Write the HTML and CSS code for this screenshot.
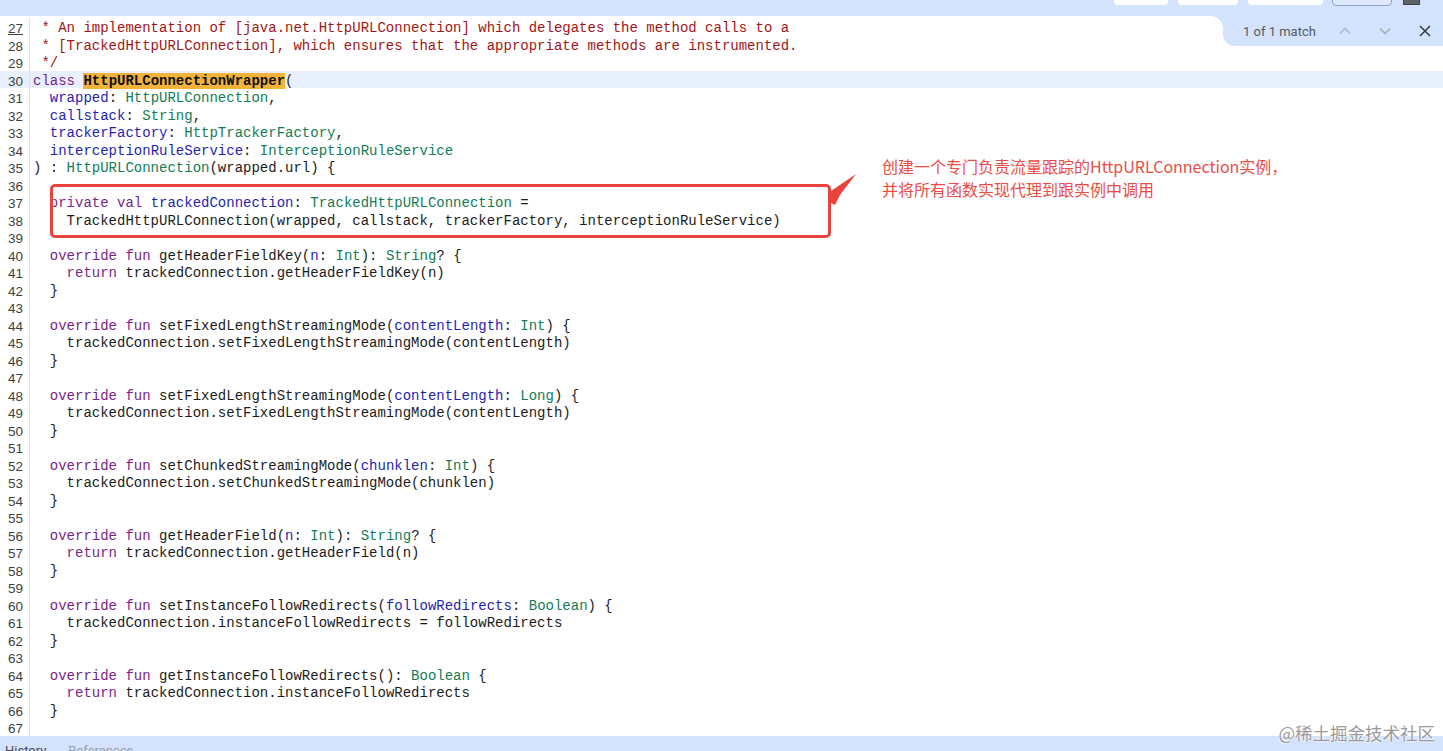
FILE: index.html
```html
<!DOCTYPE html>
<html lang="en">
<head>
    <meta charset="UTF-8">
    <title>HttpURLConnectionWrapper.kt</title>
    <link rel="stylesheet" href="styles.css">
</head>
<body>

    <div class="topbar">
        <div class="top-actions">
            <span class="top-btn w54"></span>
            <span class="top-btn w60"></span>
            <span class="top-btn w75"></span>
            <span class="top-btn outline w59"></span>
            <span class="top-icon"></span>
        </div>
    </div>

    <div class="editor">
        <div class="line"><span class="num under">27</span><span class="code c"> * An implementation of [java.net.HttpURLConnection] which delegates the method calls to a</span></div>
        <div class="line"><span class="num">28</span><span class="code c"> * [TrackedHttpURLConnection], which ensures that the appropriate methods are instrumented.</span></div>
        <div class="line"><span class="num">29</span><span class="code c"> */</span></div>
        <div class="line current"><span class="num">30</span><span class="code"><span class="k">class</span> <span class="match">HttpURLConnectionWrapper</span>(</span></div>
        <div class="line"><span class="num">31</span><span class="code">  <span class="d">wrapped</span>: <span class="t">HttpURLConnection</span>,</span></div>
        <div class="line"><span class="num">32</span><span class="code">  <span class="d">callstack</span>: <span class="t">String</span>,</span></div>
        <div class="line"><span class="num">33</span><span class="code">  <span class="d">trackerFactory</span>: <span class="t">HttpTrackerFactory</span>,</span></div>
        <div class="line"><span class="num">34</span><span class="code">  <span class="d">interceptionRuleService</span>: <span class="t">InterceptionRuleService</span></span></div>
        <div class="line"><span class="num">35</span><span class="code">) : <span class="t">HttpURLConnection</span>(wrapped.url) {</span></div>
        <div class="line"><span class="num">36</span><span class="code"></span></div>
        <div class="line"><span class="num">37</span><span class="code">  <span class="k">private val</span> <span class="d">trackedConnection</span>: <span class="t">TrackedHttpURLConnection</span> =</span></div>
        <div class="line"><span class="num">38</span><span class="code">    TrackedHttpURLConnection(wrapped, callstack, trackerFactory, interceptionRuleService)</span></div>
        <div class="line"><span class="num">39</span><span class="code"></span></div>
        <div class="line"><span class="num">40</span><span class="code">  <span class="k">override fun</span> getHeaderFieldKey(<span class="d">n</span>: <span class="t">Int</span>): <span class="t">String</span>? {</span></div>
        <div class="line"><span class="num">41</span><span class="code">    <span class="k">return</span> trackedConnection.getHeaderFieldKey(n)</span></div>
        <div class="line"><span class="num">42</span><span class="code">  }</span></div>
        <div class="line"><span class="num">43</span><span class="code"></span></div>
        <div class="line"><span class="num">44</span><span class="code">  <span class="k">override fun</span> setFixedLengthStreamingMode(<span class="d">contentLength</span>: <span class="t">Int</span>) {</span></div>
        <div class="line"><span class="num">45</span><span class="code">    trackedConnection.setFixedLengthStreamingMode(contentLength)</span></div>
        <div class="line"><span class="num">46</span><span class="code">  }</span></div>
        <div class="line"><span class="num">47</span><span class="code"></span></div>
        <div class="line"><span class="num">48</span><span class="code">  <span class="k">override fun</span> setFixedLengthStreamingMode(<span class="d">contentLength</span>: <span class="t">Long</span>) {</span></div>
        <div class="line"><span class="num">49</span><span class="code">    trackedConnection.setFixedLengthStreamingMode(contentLength)</span></div>
        <div class="line"><span class="num">50</span><span class="code">  }</span></div>
        <div class="line"><span class="num">51</span><span class="code"></span></div>
        <div class="line"><span class="num">52</span><span class="code">  <span class="k">override fun</span> setChunkedStreamingMode(<span class="d">chunklen</span>: <span class="t">Int</span>) {</span></div>
        <div class="line"><span class="num">53</span><span class="code">    trackedConnection.setChunkedStreamingMode(chunklen)</span></div>
        <div class="line"><span class="num">54</span><span class="code">  }</span></div>
        <div class="line"><span class="num">55</span><span class="code"></span></div>
        <div class="line"><span class="num">56</span><span class="code">  <span class="k">override fun</span> getHeaderField(<span class="d">n</span>: <span class="t">Int</span>): <span class="t">String</span>? {</span></div>
        <div class="line"><span class="num">57</span><span class="code">    <span class="k">return</span> trackedConnection.getHeaderField(n)</span></div>
        <div class="line"><span class="num">58</span><span class="code">  }</span></div>
        <div class="line"><span class="num">59</span><span class="code"></span></div>
        <div class="line"><span class="num">60</span><span class="code">  <span class="k">override fun</span> setInstanceFollowRedirects(<span class="d">followRedirects</span>: <span class="t">Boolean</span>) {</span></div>
        <div class="line"><span class="num">61</span><span class="code">    trackedConnection.instanceFollowRedirects = followRedirects</span></div>
        <div class="line"><span class="num">62</span><span class="code">  }</span></div>
        <div class="line"><span class="num">63</span><span class="code"></span></div>
        <div class="line"><span class="num">64</span><span class="code">  <span class="k">override fun</span> getInstanceFollowRedirects(): <span class="t">Boolean</span> {</span></div>
        <div class="line"><span class="num">65</span><span class="code">    <span class="k">return</span> trackedConnection.instanceFollowRedirects</span></div>
        <div class="line"><span class="num">66</span><span class="code">  }</span></div>
        <div class="line"><span class="num">67</span><span class="code"></span></div>

        <!-- annotation drawn over the code -->
        <div class="mark-box"></div>
        <svg class="mark-arrow" width="30" height="34" viewBox="0 0 30 34">
            <polygon points="1,18 26,1 10,22 5,32 1,30" fill="#e8433d"/>
        </svg>
        <div class="note">
            <p>创建一个专门负责流量跟踪的HttpURLConnection实例，</p>
            <p>并将所有函数实现代理到跟实例中调用</p>
        </div>

        <div class="findbar">
            <span class="find-count">1 of 1 match</span>
            <svg class="find-icon" width="16" height="16" viewBox="0 0 16 16">
                <path d="M3 10.5 L8 5.5 L13 10.5" fill="none" stroke="#b4b9c2" stroke-width="1.6"/>
            </svg>
            <svg class="find-icon" width="16" height="16" viewBox="0 0 16 16">
                <path d="M3 5.5 L8 10.5 L13 5.5" fill="none" stroke="#a9aeb6" stroke-width="1.6"/>
            </svg>
            <svg class="find-icon close" width="16" height="16" viewBox="0 0 16 16">
                <path d="M3 3 L13 13 M13 3 L3 13" fill="none" stroke="#3c4043" stroke-width="1.6"/>
            </svg>
        </div>
    </div>

    <div class="bottombar">
        <span class="tab">History</span>
        <span class="tab dim">References</span>
    </div>

    <div class="watermark">@稀土掘金技术社区</div>

</body>
</html>
```

FILE: styles.css
```css
body {
    margin: 0;
    background-color: white;
    overflow: hidden;
    height: 751px;
    position: relative;
    font-family: 'Liberation Sans', Arial, sans-serif;
}

.topbar {
    height: 16px;
    background-color: #d3e3fd;
    overflow: hidden;
}

.top-actions {
    display: flex;
    justify-content: flex-end;
    align-items: flex-start;
    gap: 10px;
    padding-right: 23px;
    margin-top: -12px;
}

.top-btn {
    height: 17px;
    background-color: white;
    border-radius: 4px;
}

.top-btn.outline {
    background-color: #dde8fb;
    border: 1px solid #8fa4c4;
    height: 16px;
    margin-left: -1px;
}

.w54 { width: 54px; }
.w60 { width: 60px; }
.w75 { width: 75px; }
.w59 { width: 58px; }

.top-icon {
    width: 15px;
    height: 15px;
    margin-left: 1px;
    background-color: #5f6368;
    border: 1px solid #3c4043;
}

.editor {
    position: relative;
    padding-top: 2px;
}

.line {
    display: flex;
    height: 17.5px;
    line-height: 17.5px;
}

.line.current {
    background-color: #e8f0fe;
}

.num {
    width: 23px;
    padding-right: 6px;
    padding-top: 2px;
    flex-shrink: 0;
    text-align: right;
    border-right: 1px solid #e2e2e2;
    font-family: 'Liberation Sans', Arial, sans-serif;
    font-size: 13.5px;
    color: #3f3f3f;
}

.num.under {
    text-decoration: underline;
}

.code {
    padding-left: 3px;
    padding-top: 2px;
    white-space: pre;
    font-family: 'Liberation Mono', 'Courier New', monospace;
    font-size: 14px;
    color: #1c1c1c;
}

.c { color: #a31515; }
.k { color: #7a1f8c; }
.d { color: #1f1fb4; }
.t { color: #117d58; }

.match {
    background-color: #f2b33a;
    font-weight: bold;
    color: #111;
}

.mark-box {
    position: absolute;
    left: 50px;
    top: 168px;
    width: 781px;
    height: 54px;
    box-sizing: border-box;
    border: 3px solid #e8433d;
    border-radius: 5px;
}

.mark-arrow {
    position: absolute;
    left: 830px;
    top: 157px;
}

.note {
    position: absolute;
    left: 882px;
    top: 139px;
    color: #ec4c46;
    font-family: 'Noto Sans CJK SC', 'Noto Sans', sans-serif;
    font-size: 16px;
    line-height: 23px;
}

.note p {
    margin: 0;
}

.findbar {
    position: absolute;
    top: 0;
    right: 0;
    width: 220px;
    height: 30px;
    background-color: #d3e3fd;
    border-bottom-left-radius: 12px;
    display: flex;
    align-items: center;
    padding-left: 20px;
    box-sizing: border-box;
    font-family: Roboto, 'Liberation Sans', sans-serif;
}

.findbar::before {
    content: "";
    position: absolute;
    left: -12px;
    top: 0;
    width: 12px;
    height: 12px;
    background: radial-gradient(circle at 0 100%, transparent 11.5px, #d3e3fd 12px);
}

.find-count {
    font-size: 13px;
    color: #555a60;
    margin-right: 21px;
}

.find-icon {
    margin-right: 24px;
}

.find-icon.close {
    margin-right: 0;
}

.bottombar {
    height: 16px;
    background-color: #d3e3fd;
    overflow: hidden;
    display: flex;
    gap: 22px;
    padding-left: 5px;
    padding-top: 7px;
    box-sizing: border-box;
    font-family: Roboto, 'Liberation Sans', sans-serif;
    font-size: 13px;
    line-height: 16px;
    color: #4a4f55;
}

.bottombar .dim {
    color: #9aa0a8;
}

.watermark {
    position: absolute;
    right: 8px;
    bottom: 6px;
    font-family: 'Noto Sans CJK SC', sans-serif;
    font-size: 17.5px;
    line-height: 24px;
    color: #9a9a9a;
    text-shadow: 0 0 2px white, 0 0 2px white;
}
```
